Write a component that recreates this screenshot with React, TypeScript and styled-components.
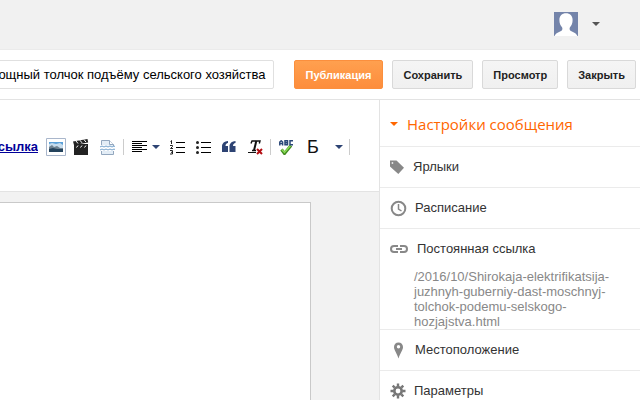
import React from "react";
import styled, { createGlobalStyle } from "styled-components";

const GlobalStyle = createGlobalStyle`
  * { box-sizing: border-box; }
  html, body { margin: 0; overflow: hidden; }
  body { background: #fff; color: #222; font: 13px/16px "Liberation Sans", Arial, sans-serif; }
  button { font: inherit; color: inherit; margin: 0; padding: 0; border: 0; background: none; cursor: pointer; }
  svg { display: block; flex: none; }
`;

const Page = styled.div`
  display: flex;
  flex-direction: column;
  height: 100vh;
`;

const Header = styled.header`
  display: flex;
  flex: none;
  justify-content: flex-end;
  align-items: center;
  height: 50px;
  padding: 0 40px 2px 0;
  background: #f1f1f1;
  border-bottom: 1px solid #ebebeb;
`;

const Account = styled.button`
  display: flex;
  align-items: center;
  gap: 14px;
`;

const TitleBar = styled.div`
  display: flex;
  flex: none;
  align-items: center;
  gap: 9px;
  height: 50px;
  padding: 0 4px 0 0;
  border-bottom: 1px solid #e3e3e3;
`;

const TitleInput = styled.input`
  flex: 1;
  min-width: 0;
  height: 29px;
  margin: 0 11px 0 -40px;
  padding: 0 7px;
  border: 1px solid #e0e0e0;
  border-radius: 2px;
  background: #fff;
  color: #000;
  font: inherit;
  text-align: right;
`;

const ActionButton = styled.button<{ $primary?: boolean }>`
  flex: none;
  height: 29px;
  padding: 0 ${(p) => (p.$primary ? 11 : 10)}px;
  border: 1px solid ${(p) => (p.$primary ? "#fb8f3d" : "#d9d9d9")};
  border-radius: 2px;
  background: ${(p) => (p.$primary ? "linear-gradient(#ffa04f, #fd8d3c)" : "linear-gradient(#f5f5f5, #f0f0f0)")};
  color: ${(p) => (p.$primary ? "#fff" : "#222")};
  font-size: 11px;
  font-weight: bold;
`;

const Main = styled.main`
  display: flex;
  flex: 1;
  min-height: 0;
`;

const Editor = styled.section`
  display: flex;
  flex: 1;
  flex-direction: column;
  min-width: 0;
  background: #f2f2f2;
`;

const Toolbar = styled.div`
  display: flex;
  flex: none;
  align-items: center;
  height: 92px;
  padding-top: 3px;
  border-bottom: 1px solid #e3e3e3;
  background: #fff;
`;

const LinkTool = styled.a`
  display: flex;
  flex: none;
  justify-content: flex-end;
  width: 38px;
  margin-right: 8px;
  overflow: hidden;
  color: #000099;
  font-weight: bold;
  text-decoration: underline;
`;

const Tool = styled.button<{ $width: number }>`
  display: flex;
  flex: none;
  align-items: center;
  gap: 5px;
  width: ${(p) => p.$width}px;
  height: 22px;
`;

const Separator = styled.span`
  flex: none;
  width: 1px;
  height: 16px;
  margin-right: 8px;
  background: #ccc;
`;

const Transliterate = styled.span`
  width: 23px;
  color: #111;
  font-size: 18px;
  line-height: 22px;
  text-align: left;
`;

const Canvas = styled.div`
  flex: 1;
  padding: 10px 68px 0 0;
`;

const Paper = styled.div`
  height: 100%;
  border: solid #c9c9c9;
  border-width: 1px 1px 0 0;
  background: #fff;
`;

const Sidebar = styled.aside`
  flex: none;
  width: 261px;
  border-left: 1px solid #e3e3e3;
  background: #fff;
`;

const SettingsTitle = styled.button`
  display: flex;
  align-items: center;
  gap: 9px;
  width: 100%;
  height: 46px;
  padding: 2px 10px 0;
  color: #ff6600;
  font: 15px/22px "Open Sans", sans-serif;
`;

const Setting = styled.section`
  border-top: 1px solid #ebebeb;
`;

const SettingButton = styled.button`
  display: flex;
  align-items: center;
  gap: 8px;
  width: 100%;
  height: 40px;
  padding: 0 10px;
  color: #333;
`;

const Permalink = styled.p`
  margin: 0;
  padding: 0 24px 0 34px;
  color: #888;
  line-height: 15px;
`;

const Arrow = ({ color }: { color: string }) => (
  <svg width="8" height="4" viewBox="0 0 8 4"><path d="M0 0h8L4 4z" fill={color} /></svg>
);

const Avatar = () => (
  <svg width="24" height="24" viewBox="0 0 24 24">
    <rect width="24" height="24" fill="#7484aa" />
    <path d="M12 1.2c4 0 6.600 2.700 6.600 6.800 0 3-1 5.600-2.600 7.300-.6 1-.6 2.700.5 3.400C19 20.200 22 20.500 23.500 24H.5C2 20.500 5 20.200 7.500 18.700c1.100-.7 1.100-2.400.5-3.400C6.400 13.600 5.400 11 5.400 8c0-4.100 2.600-6.800 6.600-6.800z" fill="#fff" />
  </svg>
);

const ImageIcon = () => (
  <svg width="20" height="18" viewBox="0 0 20 18">
    <path d="M.5.5h19v17H.5z" fill="#fff" stroke="#a9b6cb" />
    <path d="M3 4h14v10H3z" fill="#5aa0d8" />
    <path d="M3 6l3-1 4 1 4-1 3 2v3H3z" fill="#c6dced" />
    <path d="M3 9l3-2 2 2 3-1 3 2h3v1H3z" fill="#6d8190" />
    <path d="M3 11l4-1 4 1h6v3H3z" fill="#24435c" />
  </svg>
);

const ClapperIcon = () => (
  <svg width="16" height="16" viewBox="0 0 16 16">
    <path d="M1 5h14v11H1z" fill="#222" />
    <path d="M0 2.500L14.500 0l.7 3.500L1 6z" fill="#222" />
    <path d="M3 2l2 2.500M7 1.300l2 2.500M11 .6l2 2.500M3.500 8.500l1.500-2M7.500 8.500l1.500-2M11.500 8.500l1.500-2" stroke="#fff" />
  </svg>
);

const PageBreakIcon = () => (
  <svg width="15" height="17" viewBox="0 0 15 17" fill="none">
    <path d="M1.500 6V1.500h8l4 4V7M1.500 12v3.500h12V12" fill="#e3edf6" stroke="#93a7be" />
    <path d="M9.500 1.500v4h4" fill="#fff" stroke="#93a7be" />
    <path d="M1 7.500h13v3.500H1z" fill="#fff" />
    <path d="M0 8l2-1 2 1 2-1 2 1 2-1 2 1 2-1 1 .5M0 11l2-1 2 1 2-1 2 1 2-1 2 1 2-1 1 .5" stroke="#73a2cc" />
  </svg>
);

const AlignIcon = () => (
  <svg width="15" height="12" viewBox="0 0 15 12" stroke="#000" shapeRendering="crispEdges">
    <path d="M0 .5h15M0 2.500h10M0 4.500h15M0 6.500h10M0 8.500h15M0 10.500h10" />
  </svg>
);

const NumberedIcon = () => (
  <svg width="15" height="15" viewBox="0 0 15 15" fill="none" stroke="#222">
    <path d="M6 2.500h9M6 7.500h9M6 12.500h9" stroke="#000" />
    <path d="M.5 1.500l1-1V4M0 5.500h2.500v1L.5 8.500H3M0 10.500h2.500v3.500H0M1 12.300h1" />
  </svg>
);

const BulletIcon = () => (
  <svg width="15" height="13" viewBox="0 0 15 13">
    <path d="M5 1.500h10M5 6.500h10M5 11.500h10" stroke="#000" />
    <g fill="#222"><circle cx="1.500" cy="1.500" r="1.500" /><circle cx="1.500" cy="6.500" r="1.500" /><circle cx="1.500" cy="11.500" r="1.500" /></g>
  </svg>
);

const QuoteIcon = () => (
  <svg width="14" height="12" viewBox="0 0 14 12" fill="#2d4373">
    <path d="M6 0v2C4.500 2.200 3.500 3.300 3.500 5H6v6H0V5.500C0 2.300 2.500.2 6 0zM13.500 0v2C12 2.200 11 3.300 11 5h2.500v6h-6V5.500c0-3.200 2.500-5.300 6-5.500z" />
  </svg>
);

const ClearIcon = () => (
  <svg width="15" height="15" viewBox="0 0 15 15">
    <path d="M3 3.500L4 1h8l-.7 2.500M4 10.500h4" fill="none" stroke="#111" strokeWidth="1.400" />
    <path d="M8.300 1L6 10.500" stroke="#111" strokeWidth="2" />
    <path d="M0 12.500h8" stroke="#111" />
    <path d="M9 9l5 5M14 9l-5 5" stroke="#b40d12" strokeWidth="2" />
  </svg>
);

const SpellIcon = () => (
  <svg width="15" height="15" viewBox="0 0 15 15" fill="none">
    <path d="M2.500 9.500l3 4 6.500-8" stroke="#438a20" strokeWidth="3" />
    <path d="M2.800 9.500l2.700 3 6-7" stroke="#8ade55" strokeWidth="1.400" />
    <path d="M.8 5.500V2L2.200.8 3.600 2v3.500M.8 3.500h2.800M6 .8v4h2.500v-4zM6 2.800h2.500M14 .8h-3v4h3" stroke="#2a4778" strokeWidth="1.500" />
  </svg>
);

const TagIcon = () => (
  <svg width="15" height="15" viewBox="0 0 15 15" fill="#888"><path fillRule="evenodd" d="M0 .5h6.500L14 7.800 8.300 14 0 6.500zm1.700 1.700v1.500h1.500V2.200z" /></svg>
);

const ClockIcon = () => (
  <svg width="17" height="17" viewBox="0 0 17 17" fill="none" stroke="#888">
    <circle cx="8.500" cy="8.500" r="6.800" strokeWidth="2" /><path d="M8.500 4v5l3 2" strokeWidth="1.500" />
  </svg>
);

const ChainIcon = () => (
  <svg width="19" height="8" viewBox="0 0 19 8" fill="none" stroke="#888" strokeWidth="2">
    <path d="M8 1H4a3 3 0 000 6h4M10 1h4a3 3 0 010 6h-4M6 4h6" />
  </svg>
);

const PinIcon = () => (
  <svg width="17" height="17" viewBox="0 0 17 17" fill="#888">
    <path fillRule="evenodd" d="M8.500.5C11.200.5 13 2.400 13 4.900c0 3-2.700 5.900-4.500 11.600C6.700 10.800 4 7.900 4 4.900 4 2.400 5.800.5 8.500.5zm0 2.600a1.700 1.700 0 100 3.400 1.700 1.700 0 000-3.400z" />
  </svg>
);

const GearIcon = () => (
  <svg width="16" height="16" viewBox="0 0 16 16" fill="none" stroke="#777">
    <circle cx="8" cy="8" r="3.700" strokeWidth="2.600" />
    <path d="M8 .5v3M8 12.500v3M.5 8h3M12.500 8h3M2.700 2.700l2 2M11.300 11.300l2 2M13.300 2.700l-2 2M4.700 11.300l-2 2" strokeWidth="2.400" />
  </svg>
);

const settings = [
  { label: "Ярлыки", icon: <TagIcon /> },
  { label: "Расписание", icon: <ClockIcon /> },
  { label: "Постоянная ссылка", icon: <ChainIcon />, detail: "/2016/10/Shirokaja-elektrifikatsija-juzhnyh-guberniy-dast-moschnyj-tolchok-podemu-selskogo-hozjajstva.html" },
  { label: "Местоположение", icon: <PinIcon /> },
  { label: "Параметры", icon: <GearIcon /> },
];

export default function App() {
  return (
    <Page>
      <GlobalStyle />
      <Header>
        <Account aria-label="Аккаунт"><Avatar /><Arrow color="#555" /></Account>
      </Header>
      <TitleBar>
        <TitleInput aria-label="Заголовок сообщения" defaultValue="мощный толчок подъёму сельского хозяйства" />
        <ActionButton $primary>Публикация</ActionButton>
        <ActionButton>Сохранить</ActionButton>
        <ActionButton>Просмотр</ActionButton>
        <ActionButton>Закрыть</ActionButton>
      </TitleBar>
      <Main>
        <Editor>
          <Toolbar>
            <LinkTool href="#link">Ссылка</LinkTool>
            <Tool $width={27} aria-label="Изображение"><ImageIcon /></Tool>
            <Tool $width={27} aria-label="Видео"><ClapperIcon /></Tool>
            <Tool $width={23} aria-label="Разрыв страницы"><PageBreakIcon /></Tool>
            <Separator />
            <Tool $width={38} aria-label="Выравнивание"><AlignIcon /><Arrow color="#2d4373" /></Tool>
            <Tool $width={26} aria-label="Нумерованный список"><NumberedIcon /></Tool>
            <Tool $width={26} aria-label="Маркированный список"><BulletIcon /></Tool>
            <Tool $width={26} aria-label="Цитата"><QuoteIcon /></Tool>
            <Tool $width={22} aria-label="Удалить форматирование"><ClearIcon /></Tool>
            <Separator />
            <Tool $width={28} aria-label="Проверка правописания"><SpellIcon /></Tool>
            <Tool $width={42} aria-label="Транслитерация"><Transliterate>Б</Transliterate><Arrow color="#2d4373" /></Tool>
            <Separator />
          </Toolbar>
          <Canvas><Paper /></Canvas>
        </Editor>
        <Sidebar>
          <SettingsTitle><Arrow color="#ff6600" />Настройки сообщения</SettingsTitle>
          {settings.map((s) => (
            <Setting key={s.label}>
              <SettingButton>{s.icon}{s.label}</SettingButton>
              {s.detail && <Permalink>{s.detail}</Permalink>}
            </Setting>
          ))}
        </Sidebar>
      </Main>
    </Page>
  );
}
